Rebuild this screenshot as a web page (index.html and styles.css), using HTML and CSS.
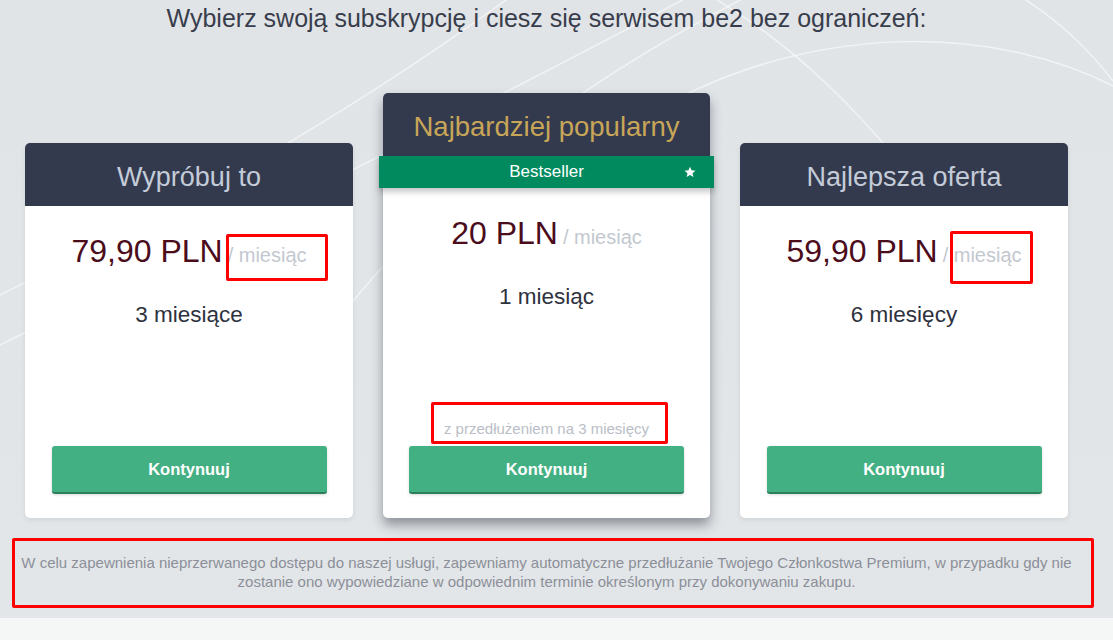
FILE: index.html
```html
<!DOCTYPE html>
<html lang="pl">
  <head>
    <meta charset="UTF-8" />
    <meta name="viewport" content="width=device-width, initial-scale=1.0" />
    <title>Subskrypcja be2</title>
    <link rel="stylesheet" href="styles.css">
  </head>
  <body>
    <div class="page">
      <svg class="bg-lines" width="1113" height="618" viewBox="0 0 1113 618">
        <path d="M-10 350 C 150 270, 420 140, 720 -20" />
        <path d="M-10 300 C 150 220, 300 150, 520 -10" />
        <path d="M330 330 C 430 200, 560 90, 760 -10" />
        <path d="M640 120 C 800 20, 1000 20, 1130 95" />
        <path d="M700 -10 C 790 40, 860 110, 930 200" />
        <path d="M1010 -10 C 1060 20, 1090 50, 1120 90" />
      </svg>

      <div class="wrap">
        <h2 class="title">Wybierz swoją subskrypcję i ciesz się serwisem be2 bez ograniczeń:</h2>

        <div class="plans">
          <div class="card">
            <div class="card-head">Wypróbuj to</div>
            <div class="price">79,90 PLN<span class="per">/ miesiąc</span></div>
            <div class="months">3 miesiące</div>
            <button class="btn">Kontynuuj</button>
            <div class="mark mark-left"></div>
          </div>

          <div class="card card-popular">
            <div class="card-head gold">Najbardziej popularny</div>
            <div class="ribbon">
              Bestseller
              <svg class="star" width="12" height="12" viewBox="0 0 24 24">
                <path d="M12 1.5l3.1 7.2 7.8.7-5.9 5.2 1.8 7.6L12 18.2l-6.8 4 1.8-7.6-5.9-5.2 7.8-.7z" fill="#fff" />
              </svg>
            </div>
            <div class="price">20 PLN<span class="per">/ miesiąc</span></div>
            <div class="months">1 miesiąc</div>
            <div class="note">z przedłużeniem na 3 miesięcy</div>
            <button class="btn">Kontynuuj</button>
            <div class="mark mark-note"></div>
          </div>

          <div class="card">
            <div class="card-head">Najlepsza oferta</div>
            <div class="price">59,90 PLN<span class="per">/ miesiąc</span></div>
            <div class="months">6 miesięcy</div>
            <button class="btn">Kontynuuj</button>
            <div class="mark mark-right"></div>
          </div>
        </div>

        <p class="disclaimer">W celu zapewnienia nieprzerwanego dostępu do naszej usługi, zapewniamy automatyczne przedłużanie Twojego Członkostwa Premium, w przypadku gdy nie zostanie ono wypowiedziane w odpowiednim terminie określonym przy dokonywaniu zakupu.</p>
      </div>
    </div>
    <div class="footer-strip"></div>
  </body>
</html>
```

FILE: styles.css
```css
body {
  margin: 0;
  font-family: "Liberation Sans", Arial, sans-serif;
  background: #f5f7f7;
}

.page {
  position: relative;
  height: 618px;
  overflow: hidden;
  background: linear-gradient(180deg, #e1e4e7 0%, #e3e6e8 100%);
}

.bg-lines {
  position: absolute;
  left: 0;
  top: 0;
}

.bg-lines path {
  fill: none;
  stroke: #ffffff;
  stroke-width: 1.5;
  opacity: 0.55;
}

.wrap {
  position: relative;
  width: 1093px;
}

.title {
  margin: 0;
  padding-top: 3px;
  font-size: 25px;
  line-height: 30px;
  font-weight: normal;
  color: #383d4c;
  text-align: center;
}

.plans {
  display: flex;
  align-items: flex-end;
  gap: 30px;
  margin-top: 60px;
  padding-left: 25px;
}

.card {
  position: relative;
  width: 328px;
  height: 375px;
  background: #fff;
  border-radius: 5px;
  box-shadow: 0 2px 5px rgba(0, 0, 0, 0.08);
  display: flex;
  flex-direction: column;
  align-items: center;
}

.card-popular {
  width: 327px;
  height: 425px;
  box-shadow: 0 7px 12px rgba(40, 45, 60, 0.45);
}

.card-head {
  box-sizing: border-box;
  align-self: stretch;
  height: 63px;
  padding-top: 5px;
  background: #343a4e;
  border-radius: 5px 5px 0 0;
  display: flex;
  align-items: center;
  justify-content: center;
  font-size: 27px;
  color: #c3ccd8;
}

.card-head.gold {
  font-size: 27.5px;
  color: #c8a658;
}

.ribbon {
  position: relative;
  align-self: stretch;
  margin: 0 -4px;
  height: 32px;
  background: #008a5e;
  color: #fff;
  font-size: 17px;
  display: flex;
  align-items: center;
  justify-content: center;
  box-shadow: 0 4px 6px rgba(0, 0, 0, 0.22);
}

.star {
  position: absolute;
  right: 18px;
  top: 10px;
}

.price {
  margin-top: 27px;
  font-size: 32px;
  line-height: 37px;
  color: #4b0c1b;
}

.per {
  margin-left: 5px;
  font-size: 20px;
  color: #c3c8cf;
}

.months {
  margin-top: 28px;
  font-size: 22.5px;
  line-height: 26px;
  color: #2e3240;
}

.note {
  margin-top: auto;
  margin-bottom: 8px;
  font-size: 15px;
  line-height: 18px;
  color: #b9bec6;
}

.btn {
  margin-top: auto;
  margin-bottom: 24px;
  width: 275px;
  height: 48px;
  border: none;
  border-bottom: 2px solid #2b7f5a;
  border-radius: 3px;
  background: #43b083;
  color: #fff;
  font-family: inherit;
  font-size: 16.5px;
  font-weight: bold;
  box-shadow: 0 1px 3px rgba(0, 0, 0, 0.15);
  cursor: pointer;
}

.note + .btn {
  margin-top: 0;
}

/* red highlight frames */
.mark {
  position: absolute;
  border: 3px solid #ff0000;
  border-radius: 2px;
}

.mark-left {
  left: 201px;
  top: 91px;
  width: 96px;
  height: 41px;
}

.mark-right {
  left: 210px;
  top: 88px;
  width: 77px;
  height: 47px;
}

.mark-note {
  left: 48px;
  top: 309px;
  width: 231px;
  height: 36px;
}

.disclaimer {
  box-sizing: border-box;
  width: 1082px;
  margin: 20px 0 0 12px;
  padding: 12px 16px 14px 3px;
  border: 3px solid #ff0000;
  border-radius: 2px;
  font-size: 15px;
  line-height: 19px;
  color: #8b8f99;
  text-align: center;
}

.footer-strip {
  height: 22px;
  background: #f5f7f7;
}
```
